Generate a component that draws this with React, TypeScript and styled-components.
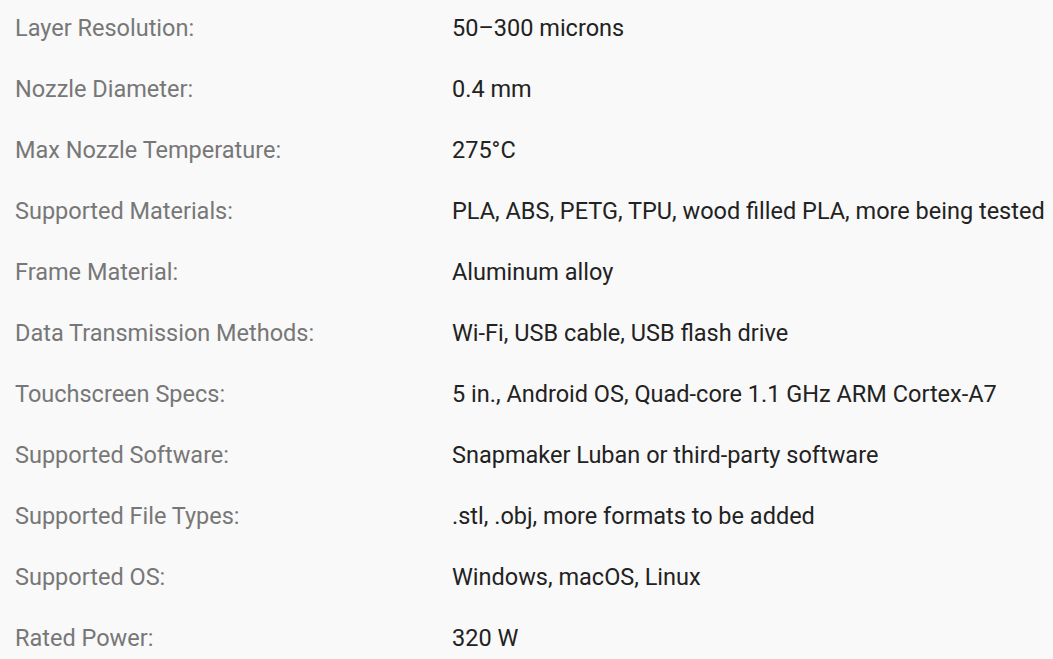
import styled, { createGlobalStyle } from 'styled-components'

const GlobalStyle = createGlobalStyle`
  body {
    margin: 0;
    background: #f9f9f9;
    font-family: Roboto, "Liberation Sans", sans-serif;
  }
`

const SpecList = styled.dl`
  margin: 0;
  padding: 0 0 0 15px;
`

const SpecRow = styled.div`
  display: grid;
  grid-template-columns: 437px 1fr;
  padding: 16px 0 21px;
  font-size: 23.5px;
  line-height: 24px;
  white-space: nowrap;
`

const Label = styled.dt`
  margin: 0;
  color: #777;
`

const Value = styled.dd`
  margin: 0;
  color: #222;
`

const specs: [string, string][] = [
  ['Layer Resolution:', '50–300 microns'],
  ['Nozzle Diameter:', '0.4 mm'],
  ['Max Nozzle Temperature:', '275°C'],
  ['Supported Materials:', 'PLA, ABS, PETG, TPU, wood filled PLA, more being tested'],
  ['Frame Material:', 'Aluminum alloy'],
  ['Data Transmission Methods:', 'Wi-Fi, USB cable, USB flash drive'],
  ['Touchscreen Specs:', '5 in., Android OS, Quad-core 1.1 GHz ARM Cortex-A7'],
  ['Supported Software:', 'Snapmaker Luban or third-party software'],
  ['Supported File Types:', '.stl, .obj, more formats to be added'],
  ['Supported OS:', 'Windows, macOS, Linux'],
  ['Rated Power:', '320 W'],
]

export default function App() {
  return (
    <>
      <GlobalStyle />
      <SpecList>
        {specs.map(([label, value]) => (
          <SpecRow key={label}>
            <Label>{label}</Label>
            <Value>{value}</Value>
          </SpecRow>
        ))}
      </SpecList>
    </>
  )
}
